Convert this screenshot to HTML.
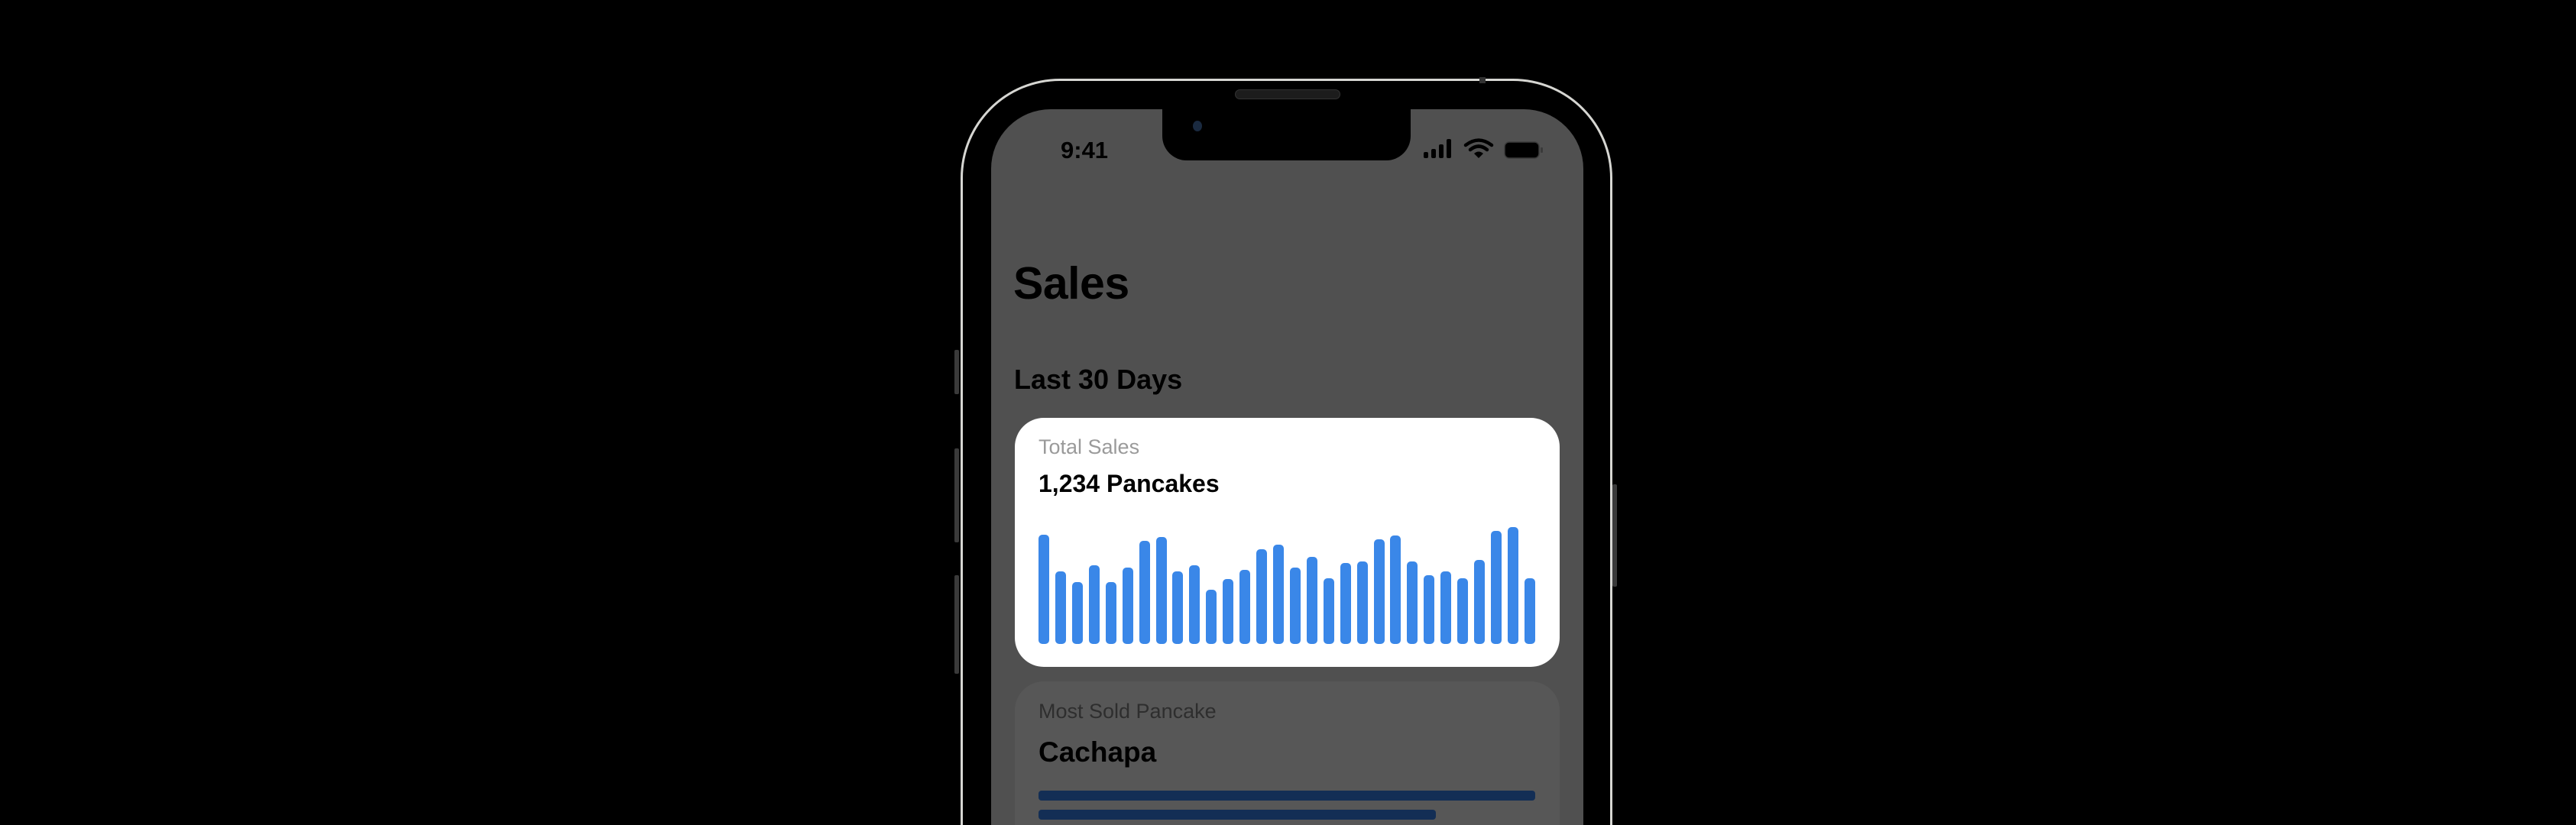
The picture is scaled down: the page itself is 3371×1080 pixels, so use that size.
<!DOCTYPE html>
<html><head><meta charset="utf-8"><style>
*{margin:0;padding:0;box-sizing:border-box}
html,body{width:3371px;height:1080px;overflow:hidden;background:#000}
body{position:relative;font-family:"Liberation Sans",Arial,sans-serif}
#w{position:absolute;left:0;top:0;width:3371px;height:1080px;overflow:hidden}
.a{position:absolute}
.t{position:absolute;white-space:nowrap;line-height:1}
</style></head><body><div id="w">
<div class="a" style="left:1249px;top:458px;width:6px;height:58px;background:#3a3a3a;border-radius:2px"></div>
<div class="a" style="left:1249px;top:587px;width:6px;height:123px;background:#3a3a3a;border-radius:2px"></div>
<div class="a" style="left:1249px;top:753px;width:6px;height:129px;background:#3a3a3a;border-radius:2px"></div>
<div class="a" style="left:2110px;top:634px;width:6px;height:134px;background:#3a3a3a;border-radius:2px"></div>
<div class="a" style="left:1257px;top:103px;width:853px;height:977px;border-radius:130px 130px 0 0;border:3px solid #d6d6d2;border-bottom:none;background:#000"></div>
<div class="a" style="left:1936px;top:101px;width:8px;height:8px;background:#333"></div>
<div class="a" style="left:1297px;top:143px;width:775px;height:937px;border-radius:78px 78px 0 0;background:#505050;overflow:hidden">
  <div class="a" style="left:224px;top:0;width:325px;height:67px;background:#000;border-radius:0 0 32px 32px"></div>
  <div class="a" style="left:264px;top:15px;width:12px;height:14px;border-radius:50%;background:#1a2a40"></div>
</div>
<div class="a" style="left:1616px;top:117px;width:138px;height:13px;background:#1c1c1c;border-radius:7px;border:1px solid #333"></div>
<div class="t" style="left:1388px;top:181px;font-size:31px;font-weight:bold;color:#000">9:41</div>
<svg class="a" style="left:1860px;top:180px" width="160" height="30" viewBox="0 0 160 30">
  <rect x="3" y="19" width="6" height="8" rx="2" fill="#000"/>
  <rect x="13" y="15" width="6" height="12" rx="2" fill="#000"/>
  <rect x="23" y="9" width="6" height="18" rx="2" fill="#000"/>
  <rect x="33" y="2" width="6" height="25" rx="2" fill="#000"/>
  <path d="M58 10 Q75 -3 92 10" stroke="#000" stroke-width="4.5" fill="none" stroke-linecap="round"/>
  <path d="M64 16 Q75 7 86 16" stroke="#000" stroke-width="4.5" fill="none" stroke-linecap="round"/>
  <path d="M69 21 L75 27 L81 21 Q75 16 69 21Z" fill="#000"/>
  <rect x="109" y="6" width="45" height="21" rx="6" fill="#000" stroke="#3a3a3a" stroke-width="1.5"/>
  <rect x="156" y="13" width="3" height="7" rx="1" fill="#3a3a3a"/>
</svg>
<div class="t" style="left:1326px;top:342px;font-size:59px;font-weight:bold;color:#000;letter-spacing:-0.5px">Sales</div>
<div class="t" style="left:1327px;top:479px;font-size:36px;font-weight:bold;color:#000">Last 30 Days</div>
<div class="a" style="left:1328px;top:547px;width:713px;height:326px;background:#fff;border-radius:38px"></div>
<div class="t" style="left:1359px;top:572px;font-size:27px;color:#9a9a9a">Total Sales</div>
<div class="t" style="left:1359px;top:617px;font-size:32px;font-weight:bold;color:#000">1,234 Pancakes</div>
<svg class="a" style="left:0;top:0" width="3371" height="1080">
<g fill="#3a87e8">
<rect x="1359" y="700" width="14" height="143" rx="5"/>
<rect x="1381" y="748" width="14" height="95" rx="5"/>
<rect x="1403" y="762" width="14" height="81" rx="5"/>
<rect x="1425" y="740" width="14" height="103" rx="5"/>
<rect x="1447" y="762" width="14" height="81" rx="5"/>
<rect x="1469" y="743" width="14" height="100" rx="5"/>
<rect x="1491" y="708" width="14" height="135" rx="5"/>
<rect x="1513" y="703" width="14" height="140" rx="5"/>
<rect x="1534" y="748" width="14" height="95" rx="5"/>
<rect x="1556" y="740" width="14" height="103" rx="5"/>
<rect x="1578" y="772" width="14" height="71" rx="5"/>
<rect x="1600" y="758" width="14" height="85" rx="5"/>
<rect x="1622" y="746" width="14" height="97" rx="5"/>
<rect x="1644" y="719" width="14" height="124" rx="5"/>
<rect x="1666" y="713" width="14" height="130" rx="5"/>
<rect x="1688" y="743" width="14" height="100" rx="5"/>
<rect x="1710" y="729" width="14" height="114" rx="5"/>
<rect x="1732" y="757" width="14" height="86" rx="5"/>
<rect x="1754" y="737" width="14" height="106" rx="5"/>
<rect x="1776" y="735" width="14" height="108" rx="5"/>
<rect x="1798" y="706" width="14" height="137" rx="5"/>
<rect x="1819" y="701" width="14" height="142" rx="5"/>
<rect x="1841" y="735" width="14" height="108" rx="5"/>
<rect x="1863" y="753" width="14" height="90" rx="5"/>
<rect x="1885" y="748" width="14" height="95" rx="5"/>
<rect x="1907" y="757" width="14" height="86" rx="5"/>
<rect x="1929" y="733" width="14" height="110" rx="5"/>
<rect x="1951" y="695" width="14" height="148" rx="5"/>
<rect x="1973" y="690" width="14" height="153" rx="5"/>
<rect x="1995" y="757" width="14" height="86" rx="5"/>
</g>
</svg>
<div class="a" style="left:1328px;top:892px;width:713px;height:188px;background:#575757;border-radius:38px 38px 0 0"></div>
<div class="t" style="left:1359px;top:918px;font-size:27px;color:#2e2e2e">Most Sold Pancake</div>
<div class="t" style="left:1359px;top:966px;font-size:37px;font-weight:bold;color:#000">Cachapa</div>
<div class="a" style="left:1359px;top:1035px;width:650px;height:13px;background:#132e55;border-radius:4px"></div>
<div class="a" style="left:1359px;top:1060px;width:520px;height:13px;background:#132e55;border-radius:4px"></div>
</div></body></html>
